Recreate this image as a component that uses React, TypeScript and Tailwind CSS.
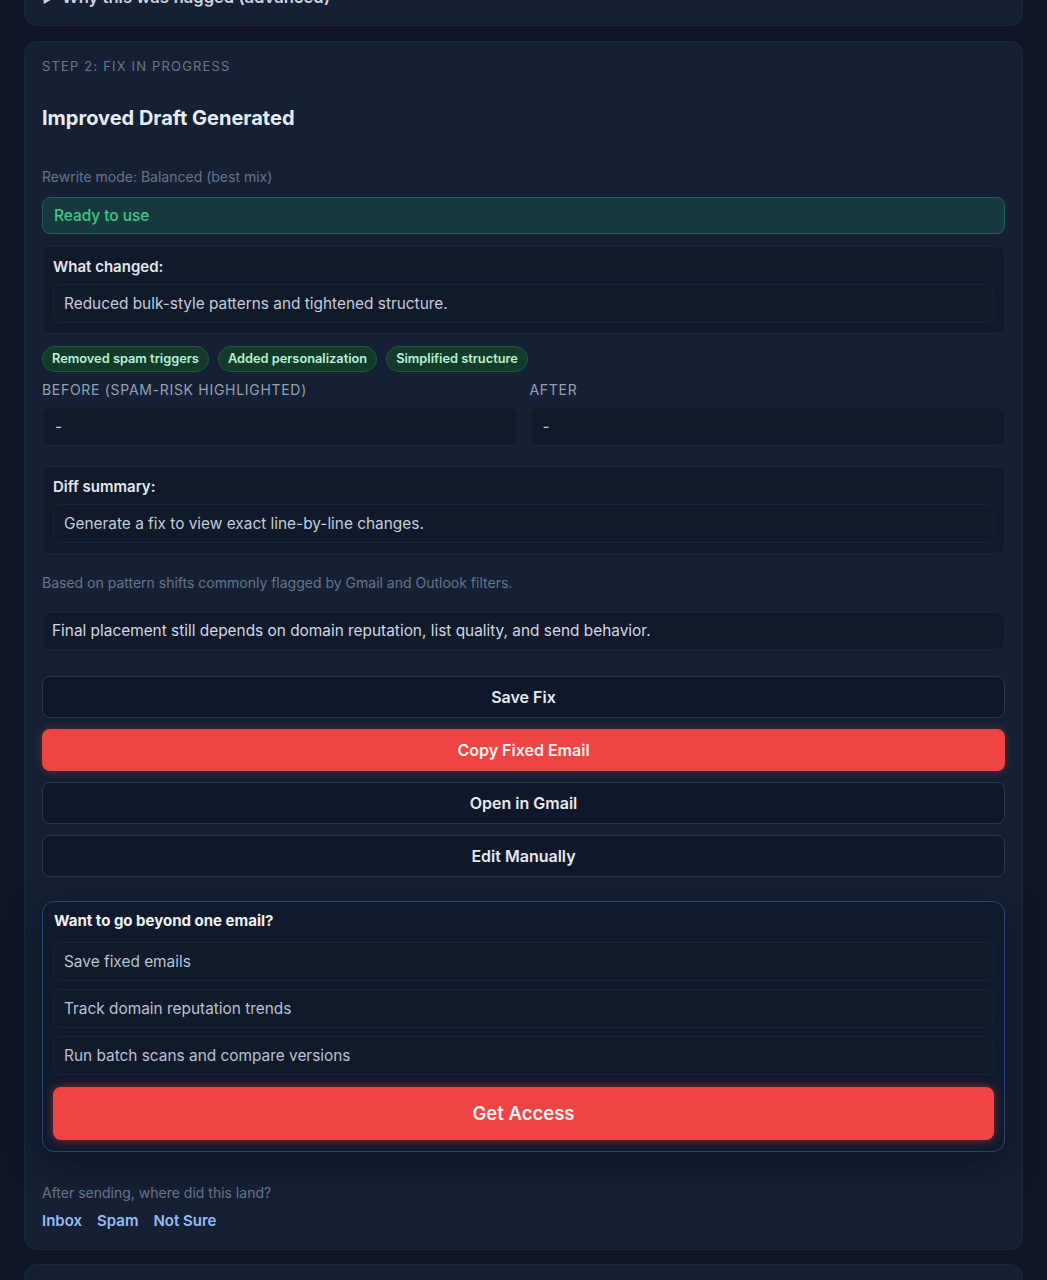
const chips = ['Removed spam triggers', 'Added personalization', 'Simplified structure']
const perks = ['Save fixed emails', 'Track domain reputation trends', 'Run batch scans and compare versions']

const card = 'rounded-xl border border-[#1c273a] bg-[#152034]'
const inner = 'rounded-lg border border-[#1a2436] bg-[#101a2b]'
const ghostBtn =
  'h-[42px] w-full rounded-lg border border-[#2a384d] bg-[#0f182a] text-[16px] font-semibold text-[#e5e9f0]'

export default function App() {
  return (
    <div
      className="min-h-[1280px] overflow-hidden bg-[#0e1524] px-6"
      style={{ fontFamily: 'Inter, "Noto Sans", "Liberation Sans", sans-serif' }}>

      {/* Step 1 (scrolled past) */}
      <div className={`${card} mt-[-34px] px-[17px] pt-[18px] pb-4`}>
        <div className="text-[16.6px] leading-6 font-semibold text-[#cbd5e1]">▶ Why this was flagged (advanced)</div>
      </div>

      {/* Step 2 */}
      <div className={`${card} mt-[15px] px-[17px] pt-[14px] pb-[17px]`}>
        <div className="text-[13px] leading-5 uppercase tracking-[0.09em] text-[#6b7789]">Step 2: Fix in progress</div>
        <h2 className="mt-[28px] text-[20px] leading-7 font-bold text-[#e8edf5]">Improved Draft Generated</h2>
        <p className="mt-[35px] text-[14px] leading-5 text-[#66748a]">Rewrite mode: Balanced (best mix)</p>

        <div className="mt-[10px] flex h-[37px] items-center rounded-lg border border-[#235f59] bg-[#17393d] px-[11px] text-[15.4px] font-medium text-[#3ec985]">
          Ready to use
        </div>

        <div className={`${inner} mt-3 px-[10px] pt-[10px] pb-[10px]`}>
          <div className="text-[15px] leading-5 font-semibold text-[#e2e8f0]">What changed:</div>
          <div className={`${inner} mt-[7px] flex h-[39px] items-center px-[10px] text-[15.4px] text-[#c3ccd8]`}>
            Reduced bulk-style patterns and tightened structure.
          </div>
        </div>

        <div className="mt-3 flex gap-[9px]">
          {chips.map(c => (
            <span
              key={c}
              className="flex h-[26px] items-center rounded-full border border-[#22573e] bg-[#143a2c] px-[9px] text-[12.8px] font-semibold text-[#b9f2d0]">
              {c}
            </span>
          ))}
        </div>

        <div className="mt-2 grid grid-cols-2 gap-3">
          {['Before (spam-risk highlighted)', 'After'].map(l => (
            <div key={l}>
              <div className="text-[14px] leading-5 uppercase tracking-[0.05em] text-[#94a0b2]">{l}</div>
              <div className={`${inner} mt-[7px] flex h-[39px] items-center px-3 text-[15.4px] text-[#c3ccd8]`}>-</div>
            </div>
          ))}
        </div>

        <div className={`${inner} mt-5 px-[10px] pt-[10px] pb-[10px]`}>
          <div className="text-[15px] leading-5 font-semibold text-[#e2e8f0]">Diff summary:</div>
          <div className={`${inner} mt-[7px] flex h-[39px] items-center px-[10px] text-[15.4px] text-[#c3ccd8]`}>
            Generate a fix to view exact line-by-line changes.
          </div>
        </div>

        <p className="mt-[19px] text-[14px] leading-5 text-[#66748a]">
          Based on pattern shifts commonly flagged by Gmail and Outlook filters.
        </p>

        <div className={`${inner} mt-[19px] flex h-[38px] items-center px-[9px] text-[15.4px] text-[#d0d7e2]`}>
          Final placement still depends on domain reputation, list quality, and send behavior.
        </div>

        {/* Actions */}
        <div className="mt-[26px] flex flex-col gap-[11px]">
          <button className={ghostBtn}>Save Fix</button>
          <button className="h-[42px] w-full rounded-lg bg-[#ef4444] text-[16px] font-semibold text-[#fff1f1] shadow-[0_0_8px_rgba(239,68,68,0.35)]">
            Copy Fixed Email
          </button>
          <button className={ghostBtn}>Open in Gmail</button>
          <button className={ghostBtn}>Edit Manually</button>
        </div>

        {/* Upsell */}
        <div className="mt-6 rounded-xl border border-[#2c4574] bg-[#111a2d] px-[10px] pt-[9px] pb-[11px] shadow-[0_12px_30px_rgba(8,12,24,0.55)]">
          <div className="pl-px text-[15px] leading-5 font-bold text-[#eef2f7]">Want to go beyond one email?</div>
          <div className="mt-[11px] flex flex-col gap-2">
            {perks.map(p => (
              <div key={p} className={`${inner} flex h-[39px] items-center px-[10px] text-[15.4px] text-[#b8c2d0]`}>
                {p}
              </div>
            ))}
          </div>
          <button className="mt-3 h-[53px] w-full rounded-lg bg-[#ef4444] text-[18.5px] font-semibold text-[#fff1f1] shadow-[0_0_10px_rgba(239,68,68,0.5)]">
            Get Access
          </button>
        </div>

        <p className="mt-[31px] text-[14px] leading-5 text-[#66748a]">After sending, where did this land?</p>
        <div className="mt-[7px] flex gap-[15px] text-[15px] leading-[22px] font-semibold text-[#93bdf2]">
          <button>Inbox</button>
          <button>Spam</button>
          <button>Not Sure</button>
        </div>
      </div>

      {/* Next step (cut off) */}
      <div className={`${card} mt-[14px] h-[80px]`} />
    </div>
  )
}
